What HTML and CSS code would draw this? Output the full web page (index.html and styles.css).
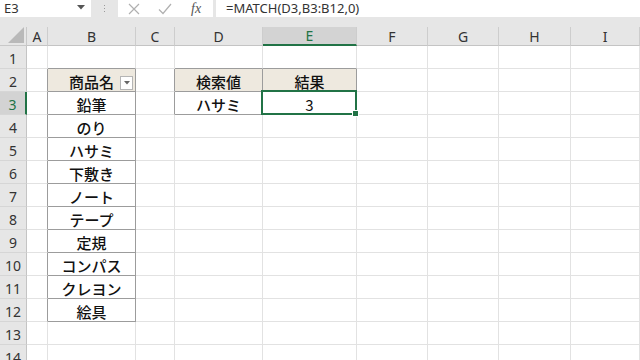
FILE: index.html
```html
<!DOCTYPE html>
<html lang="ja">
<head>
<meta charset="utf-8">
<link rel="stylesheet" href="styles.css">
</head>
<body>
<div class="topbar">
  <div class="namebox">
    <span class="nb-text">E3</span>
    <svg class="nb-arrow" width="8" height="5" viewBox="0 0 8 5"><path d="M0 0H8L4 4.5Z" fill="#555"/></svg>
  </div>
  <div class="dots"><i></i><i></i><i></i></div>
  <div class="fbtns">
    <svg class="fb-x" width="12" height="12" viewBox="0 0 12 12"><path d="M1 1L11 11M11 1L1 11" stroke="#b0b0b0" stroke-width="1.2" fill="none"/></svg>
    <svg class="fb-ok" width="14" height="12" viewBox="0 0 14 12"><path d="M1 6.5L5 10.5L13 1" stroke="#b0b0b0" stroke-width="1.2" fill="none"/></svg>
    <span class="fx">fx</span>
  </div>
  <div class="formula">=MATCH(D3,B3:B12,0)</div>
</div>
<div class="sheet">
  <div class="corner"><svg width="18" height="17" viewBox="0 0 18 17"><path d="M17 0V16H1Z" fill="#b9b9b9"/></svg></div>
  <div class="ch">A</div><div class="ch">B</div><div class="ch">C</div><div class="ch">D</div><div class="ch sel">E</div><div class="ch">F</div><div class="ch">G</div><div class="ch">H</div><div class="ch">I</div>

  <div class="rh">1</div><div class="c"></div><div class="c bt"></div><div class="c"></div><div class="c bt"></div><div class="c bt"></div><div class="c"></div><div class="c"></div><div class="c"></div><div class="c"></div>

  <div class="rh">2</div><div class="c bl"></div><div class="c th dd">商品名<span class="filter"><svg width="6" height="4" viewBox="0 0 6 4"><path d="M0 0H6L3 3.5Z" fill="#666"/></svg></span></div><div class="c bl"></div><div class="c th">検索値</div><div class="c th">結果</div><div class="c"></div><div class="c"></div><div class="c"></div><div class="c"></div>

  <div class="rh sel">3</div><div class="c bl"></div><div class="c tb">鉛筆</div><div class="c bl"></div><div class="c tb">ハサミ</div><div class="c tb active">3</div><div class="c"></div><div class="c"></div><div class="c"></div><div class="c"></div>

  <div class="rh">4</div><div class="c bl"></div><div class="c tb">のり</div><div class="c"></div><div class="c"></div><div class="c"></div><div class="c"></div><div class="c"></div><div class="c"></div><div class="c"></div>

  <div class="rh">5</div><div class="c bl"></div><div class="c tb">ハサミ</div><div class="c"></div><div class="c"></div><div class="c"></div><div class="c"></div><div class="c"></div><div class="c"></div><div class="c"></div>

  <div class="rh">6</div><div class="c bl"></div><div class="c tb">下敷き</div><div class="c"></div><div class="c"></div><div class="c"></div><div class="c"></div><div class="c"></div><div class="c"></div><div class="c"></div>

  <div class="rh">7</div><div class="c bl"></div><div class="c tb">ノート</div><div class="c"></div><div class="c"></div><div class="c"></div><div class="c"></div><div class="c"></div><div class="c"></div><div class="c"></div>

  <div class="rh">8</div><div class="c bl"></div><div class="c tb">テープ</div><div class="c"></div><div class="c"></div><div class="c"></div><div class="c"></div><div class="c"></div><div class="c"></div><div class="c"></div>

  <div class="rh">9</div><div class="c bl"></div><div class="c tb">定規</div><div class="c"></div><div class="c"></div><div class="c"></div><div class="c"></div><div class="c"></div><div class="c"></div><div class="c"></div>

  <div class="rh">10</div><div class="c bl"></div><div class="c tb">コンパス</div><div class="c"></div><div class="c"></div><div class="c"></div><div class="c"></div><div class="c"></div><div class="c"></div><div class="c"></div>

  <div class="rh">11</div><div class="c bl"></div><div class="c tb">クレヨン</div><div class="c"></div><div class="c"></div><div class="c"></div><div class="c"></div><div class="c"></div><div class="c"></div><div class="c"></div>

  <div class="rh">12</div><div class="c bl"></div><div class="c tb">絵具</div><div class="c"></div><div class="c"></div><div class="c"></div><div class="c"></div><div class="c"></div><div class="c"></div><div class="c"></div>

  <div class="rh">13</div><div class="c"></div><div class="c"></div><div class="c"></div><div class="c"></div><div class="c"></div><div class="c"></div><div class="c"></div><div class="c"></div><div class="c"></div>

  <div class="rh">14</div><div class="c"></div><div class="c"></div><div class="c"></div><div class="c"></div><div class="c"></div><div class="c"></div><div class="c"></div><div class="c"></div><div class="c"></div>
</div>
</body>
</html>
```

FILE: styles.css
```css
html, body {
  margin: 0;
  padding: 0;
  background: #ffffff;
  overflow: hidden;
}
body {
  width: 640px;
  height: 360px;
  font-family: "Noto Sans", "Noto Sans CJK JP", sans-serif;
  color: #222;
}
.topbar {
  display: flex;
  align-items: stretch;
  height: 17px;
  padding-bottom: 10px;
  background: #e6e6e6;
}
.namebox {
  width: 91px;
  background: #fff;
  display: flex;
  align-items: center;
  justify-content: space-between;
  padding: 0 4px 0 4px;
  box-sizing: border-box;
}
.nb-text {
  font-size: 13px;
  color: #333;
  line-height: 17px;
}
.nb-arrow {
  margin-right: 2px;
  margin-top: -3px;
}
.dots {
  width: 27px;
  display: flex;
  flex-direction: column;
  align-items: center;
  justify-content: center;
  gap: 2px;
}
.dots i {
  display: block;
  width: 1px;
  height: 1px;
  background: #9a9a9a;
}
.fbtns {
  width: 95px;
  background: #fff;
  display: flex;
  align-items: center;
  box-sizing: border-box;
  padding-left: 10px;
}
.fb-x { margin-right: 18px; }
.fb-ok { margin-right: 19px; }
.fx {
  font-family: "Liberation Serif", serif;
  font-style: italic;
  font-size: 14px;
  color: #555;
  line-height: 17px;
}
.formula {
  flex: 1;
  margin-left: 3px;
  background: #fff;
  padding-left: 10px;
  font-size: 13px;
  line-height: 17px;
  color: #333;
}
.sheet {
  display: grid;
  grid-template-columns: 27px 21px 88px 39px 88px 94px 71px 71px 72px 1fr;
  grid-template-rows: 19px repeat(14, 23px);
}
.corner {
  background: #e6e6e6;
  border-right: 1px solid #c8c8c8;
  border-bottom: 1px solid #c8c8c8;
  box-sizing: border-box;
  display: flex;
  align-items: flex-end;
  justify-content: flex-end;
}
.corner svg { margin: 0 1px 1px 0; }
.ch {
  background: #e6e6e6;
  border-right: 1px solid #cdcdcd;
  border-bottom: 1px solid #c4c4c4;
  box-sizing: border-box;
  font-size: 14px;
  line-height: 18px;
  padding-top: 1px;
  text-align: center;
  color: #333;
}
.ch.sel {
  background: #d3d3d3;
  border-bottom: 2px solid #217346;
  color: #217346;
  line-height: 16px;
}
.rh {
  background: #e6e6e6;
  border-right: 1px solid #c4c4c4;
  border-bottom: 1px solid #d6d6d6;
  box-sizing: border-box;
  font-size: 14px;
  line-height: 22px;
  padding-top: 2px;
  text-align: center;
  color: #333;
}
.rh.sel {
  background: #d3d3d3;
  border-right: 2px solid #217346;
  color: #217346;
}
.c {
  border-right: 1px solid #e2e2e2;
  border-bottom: 1px solid #e2e2e2;
  box-sizing: border-box;
  font-family: "Noto Sans CJK JP", sans-serif;
  font-size: 15px;
  font-weight: 500;
  line-height: 22px;
  padding-top: 2px;
  text-align: center;
  color: #111;
  position: relative;
}
.bl { border-right-color: #9c9c9c; }
.bt { border-bottom-color: #9c9c9c; }
.tb {
  border-right-color: #9c9c9c;
  border-bottom-color: #9c9c9c;
}
.th {
  background: #eee9df;
  border-right-color: #9c9c9c;
  border-bottom-color: #9c9c9c;
}
.filter {
  position: absolute;
  right: 2px;
  top: 7px;
  width: 13px;
  height: 14px;
  box-sizing: border-box;
  background: #fff;
  border: 1px solid #b5b5b5;
  display: flex;
  align-items: center;
  justify-content: center;
}
.active {
  font-weight: 400;
}
.active::after {
  content: "";
  position: absolute;
  left: -2px;
  top: -2px;
  right: -1px;
  bottom: -1px;
  border: 2px solid #217346;
  pointer-events: none;
}
.active::before {
  content: "";
  position: absolute;
  right: -3px;
  bottom: -3px;
  width: 5px;
  height: 5px;
  background: #217346;
  border: 1px solid #fff;
  z-index: 2;
}
```
